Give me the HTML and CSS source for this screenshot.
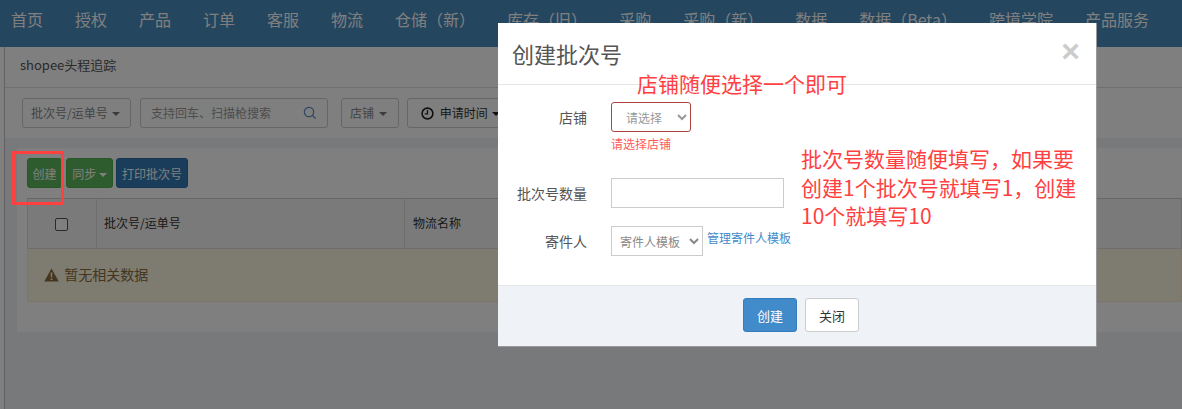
FILE: index.html
```html
<!DOCTYPE html>
<html lang="zh-CN">
<head>
    <meta charset="UTF-8">
    <title>shopee头程追踪</title>
    <link rel="stylesheet" href="styles.css">
</head>
<body>
    <div class="nav">
        <a>首页</a>
        <a>授权</a>
        <a>产品</a>
        <a>订单</a>
        <a>客服</a>
        <a>物流</a>
        <a>仓储（新）</a>
        <a>库存（旧）</a>
        <a>采购</a>
        <a>采购（新）</a>
        <a>数据</a>
        <a>数据（Beta）</a>
        <a>跨境学院</a>
        <a>产品服务</a>
    </div>

    <div class="layout">
        <div class="side-strip"></div>
        <div class="content">
            <div class="page-title">shopee头程追踪</div>

            <div class="filters">
                <div class="filter-btn type-btn">批次号/运单号 <span class="caret"></span></div>
                <div class="search-box">
                    <span>支持回车、扫描枪搜索</span>
                    <svg class="search-icon" width="14" height="14" viewBox="0 0 14 14">
                        <circle cx="6" cy="6" r="4.7" fill="none" stroke="#5b8fc4" stroke-width="1.2"/>
                        <path d="M9.5 9.5L12.6 12.6" stroke="#5b8fc4" stroke-width="1.3"/>
                    </svg>
                </div>
                <div class="filter-btn shop-btn">店铺 <span class="caret"></span></div>
                <div class="filter-btn time-btn">
                    <svg width="13" height="13" viewBox="0 0 13 13">
                        <circle cx="6.5" cy="6.5" r="5.4" fill="none" stroke="#222" stroke-width="1.6"/>
                        <path d="M6.5 3v3.8H3.8" fill="none" stroke="#222" stroke-width="1.3"/>
                    </svg>
                    申请时间 <span class="caret dark"></span>
                </div>
            </div>

            <div class="panel">
                <div class="toolbar">
                    <button class="btn green create-btn">创建</button>
                    <button class="btn green sync-btn">同步 <span class="caret white"></span></button>
                    <button class="btn blue print-btn">打印批次号</button>
                </div>
                <table class="data-table">
                    <thead>
                        <tr>
                            <th class="col-check"><span class="fake-check"></span></th>
                            <th class="col-no">批次号/运单号</th>
                            <th class="col-name">物流名称</th>
                        </tr>
                    </thead>
                    <tbody>
                        <tr>
                            <td colspan="3" class="empty-row">
                                <svg width="15" height="14" viewBox="0 0 15 14">
                                    <path d="M7.5 0.5L14.8 13.6H0.2z" fill="#8a6d3b"/>
                                    <path d="M6.6 4.6h1.8l-.3 5h-1.2zM6.6 10.4h1.8v1.7H6.6z" fill="#fcf8e3"/>
                                </svg>
                                暂无相关数据
                            </td>
                        </tr>
                    </tbody>
                </table>
            </div>
        </div>
    </div>

    <div class="backdrop"></div>
    <div class="mark-box"></div>

    <div class="modal">
        <div class="modal-header">
            <h4>创建批次号</h4>
            <span class="close">×</span>
        </div>
        <div class="modal-body">
            <div class="form-row shop-row">
                <label>店铺</label>
                <div>
                    <select class="form-select shop-select">
                        <option>请选择</option>
                    </select>
                    <p class="error-text">请选择店铺</p>
                </div>
            </div>
            <div class="form-row count-row">
                <label>批次号数量</label>
                <input type="text" class="form-input">
            </div>
            <div class="form-row sender-row">
                <label>寄件人</label>
                <select class="form-select sender-select">
                    <option>寄件人模板</option>
                </select>
                <a class="manage-link">管理寄件人模板</a>
            </div>
        </div>
        <div class="modal-footer">
            <button class="btn primary">创建</button>
            <button class="btn plain">关闭</button>
        </div>
        <div class="note note-shop">店铺随便选择一个即可</div>
        <div class="note note-count">批次号数量随便填写，如果要<br>创建1个批次号就填写1，创建<br>10个就填写10</div>
    </div>
</body>
</html>
```

FILE: styles.css
```css
* {
    box-sizing: border-box;
}

html, body {
    height: 409px;
    overflow: hidden;
}

body {
    margin: 0;
    font-family: "Noto Sans CJK SC", "Open Sans", sans-serif;
    font-size: 12px;
    color: #555;
    background: #f0f2f6;
}

.nav {
    height: 47px;
    background: #488cbe;
    display: flex;
    gap: 32px;
    padding: 7px 0 0 11px;
    font-size: 16px;
    line-height: 24px;
    color: #fff;
    white-space: nowrap;
}

.layout {
    display: flex;
    height: 362px;
}

.side-strip {
    width: 5px;
    background: #fff;
    border-right: 1px solid #c4c4c4;
}

.content {
    flex: 1;
}

.page-title {
    height: 41px;
    padding: 9px 15px;
    background: #fff;
    border-bottom: 1px solid #e0e0e0;
    font-size: 13px;
    line-height: 18px;
}

.filters {
    height: 50px;
    background: #fff;
    display: flex;
    padding: 10px 0 0 17px;
    line-height: 28px;
    color: #888;
}

.filter-btn, .search-box {
    height: 30px;
    border: 1px solid #ccc;
    border-radius: 3px;
    background: #fff;
    padding: 0 8px;
    white-space: nowrap;
}

.type-btn {
    width: 109px;
}

.search-box {
    width: 188px;
    margin-left: 9px;
    padding-left: 10px;
    display: flex;
    justify-content: space-between;
    align-items: center;
    color: #999;
}

.search-icon {
    margin-right: 2px;
}

.shop-btn {
    width: 58px;
    margin-left: 13px;
}

.time-btn {
    margin-left: 8px;
    padding: 0 13px;
    color: #333;
    width: 120px;
}

.time-btn svg {
    vertical-align: -2px;
    margin-right: 3px;
}

.caret {
    display: inline-block;
    width: 0;
    height: 0;
    margin-left: 2px;
    vertical-align: 2px;
    border-top: 4px solid #777;
    border-left: 4px solid transparent;
    border-right: 4px solid transparent;
}

.caret.dark {
    border-top-color: #222;
}

.caret.white {
    border-top-color: #fff;
    margin-left: 0;
}

.panel {
    height: 184px;
    margin: 10px 0 0 12px;
    padding: 10px 0 0 10px;
    background: #fff;
}

.toolbar {
    display: flex;
    gap: 3px;
    margin-bottom: 10px;
}

.btn {
    height: 30px;
    padding: 0;
    border: 1px solid transparent;
    border-radius: 3px;
    font-family: inherit;
    font-size: 12px;
    color: #fff;
}

.btn.green {
    background: #5cb85c;
    border-color: #4cae4c;
}

.btn.blue {
    background: #337ab7;
    border-color: #2e6da4;
}

.create-btn {
    width: 35px;
    margin-right: 1px;
}

.sync-btn {
    width: 47px;
}

.print-btn {
    width: 72px;
}

.data-table {
    width: 100%;
    border-collapse: collapse;
    table-layout: fixed;
}

.data-table th {
    height: 50px;
    background: #f5f5f5;
    border: 1px solid #ddd;
    border-top-color: #ccc;
    font-weight: normal;
    text-align: left;
    padding: 0 8px 2px 7px;
    color: #333;
}

.data-table th.col-name {
    padding-left: 8px;
}

.data-table th.col-check {
    width: 69px;
    text-align: center;
    padding-left: 6px;
}

.col-no {
    width: 308px;
}

.fake-check {
    display: inline-block;
    width: 13px;
    height: 13px;
    border: 1px solid #555;
    border-radius: 2px;
    background: #fff;
    vertical-align: middle;
}

.empty-row {
    height: 53px;
    padding: 0 16px 2px;
    background: #fcf8e3;
    border: 1px solid #faebcc;
    color: #8a6d3b;
    font-size: 14px;
}

.empty-row svg {
    vertical-align: -2px;
    margin-right: 2px;
}

.backdrop {
    position: fixed;
    inset: 0;
    background: rgba(0, 0, 0, 0.5);
}

.mark-box {
    position: absolute;
    left: 12px;
    top: 151px;
    width: 52px;
    height: 54px;
    border: 3px solid #ff4040;
}

.modal {
    position: absolute;
    left: 498px;
    top: 23px;
    width: 599px;
    height: 324px;
    background: #fff;
    border: 1px solid rgba(0, 0, 0, 0.4);
    border-top: none;
    border-left: none;
    display: flex;
    flex-direction: column;
}

.modal-header {
    height: 62px;
    flex-shrink: 0;
    border-bottom: 1px solid #e5e5e5;
    padding: 0 16px 0 14px;
    display: flex;
    align-items: center;
    justify-content: space-between;
}

.modal-header h4 {
    margin: 0 0 2px;
    font-size: 22px;
    font-weight: normal;
    color: #555;
    line-height: 60px;
}

.close {
    font-family: "Liberation Sans", sans-serif;
    font-size: 32px;
    font-weight: bold;
    color: #ccc;
    line-height: 20px;
    margin-top: -6px;
}

.modal-body {
    flex: 1;
}

.form-row {
    display: flex;
    align-items: flex-start;
    font-size: 14px;
}

.form-row label {
    width: 89px;
    text-align: right;
    line-height: 30px;
    margin-right: 24px;
    color: #555;
}

.shop-row {
    margin-top: 17px;
}

.count-row {
    margin-top: 26px;
}

.sender-row {
    margin-top: 18px;
}

.form-select, .form-input {
    height: 30px;
    font-family: inherit;
    font-size: 12px;
    color: #888;
    background: #fff;
    border: 1px solid #ccc;
}

.shop-select {
    display: block;
    width: 80px;
    padding-left: 10px;
    color: #999;
    border-color: #a94442;
    border-radius: 3px;
}

.sender-select {
    width: 92px;
    padding-left: 4px;
}

.form-input {
    width: 173px;
}

.error-text {
    margin: 4px 0 0;
    font-size: 12px;
    line-height: 16px;
    color: #ff5a5a;
}

.manage-link {
    margin-left: 4px;
    font-size: 12px;
    line-height: 24px;
    color: #428bca;
}

.modal-footer {
    height: 61px;
    flex-shrink: 0;
    background: #eff2f7;
    border-top: 1px solid #e5e5e5;
    display: flex;
    justify-content: center;
    gap: 8px;
    padding: 12px 0 0 8px;
}

.modal-footer .btn {
    width: 54px;
    height: 34px;
    font-size: 13px;
}

.btn.primary {
    background: #428bca;
    border-color: #357ebd;
}

.btn.plain {
    background: #fff;
    border-color: #ccc;
    color: #333;
}

.note {
    position: absolute;
    color: #ff4040;
    font-size: 21px;
    line-height: 28.5px;
    white-space: nowrap;
}

.note-shop {
    left: 139px;
    top: 46px;
}

.note-count {
    left: 303px;
    top: 121px;
}
```
